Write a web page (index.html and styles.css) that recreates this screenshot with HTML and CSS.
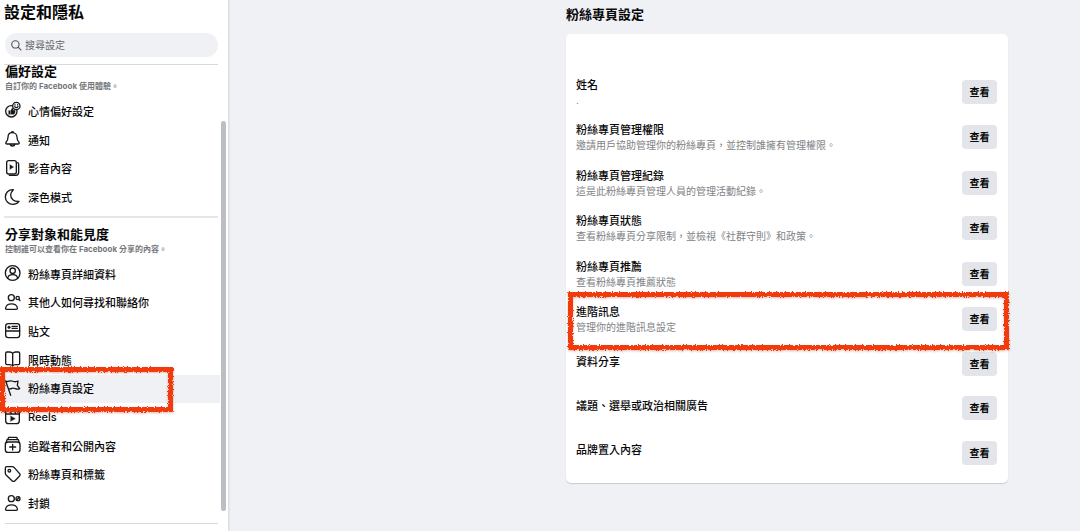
FILE: index.html
```html
<!DOCTYPE html>
<html lang="zh-Hant">
<head>
<meta charset="utf-8">
<meta name="viewport" content="width=device-width, initial-scale=1">
<title>粉絲專頁設定</title>
<link rel="stylesheet" href="styles.css">
</head>
<body>
<svg class="defs" aria-hidden="true">
  <filter id="crayon" x="-5%" y="-20%" width="110%" height="140%">
    <feTurbulence type="fractalNoise" baseFrequency="0.7" numOctaves="2" seed="4" result="noise"/>
    <feDisplacementMap in="SourceGraphic" in2="noise" scale="4" xChannelSelector="R" yChannelSelector="G" result="rough"/>
    <feGaussianBlur in="rough" stdDeviation="0.3" result="soft"/>
    <feDropShadow in="soft" dx="0" dy="1" stdDeviation="1" flood-color="#a03020" flood-opacity="0.35"/>
  </filter>
</svg>
<div class="app">
  <aside class="sidebar">
    <h1 class="sidebar-title">設定和隱私</h1>
    <label class="search">
      <svg class="search-icon" viewBox="0 0 30 30"><circle cx="12" cy="12" r="10"/><path d="M19 19l9 9"/></svg>
      <input class="search-input" type="search" placeholder="搜尋設定" aria-label="搜尋設定">
    </label>
    <section class="group">
      <h2 class="group-title">偏好設定</h2>
      <p class="group-note">自訂你的 Facebook 使用體驗。</p>
      <ul class="nav nav-short">
        <li><a class="nav-link" href="#"><svg class="icon" viewBox="0 0 48 48"><circle cx="19" cy="28" r="17"/><circle class="paper" cx="34" cy="12" r="11"/><path class="solid" d="M11 26h4v11h-4zM17 26l4-7c4-1 4 2 3 6h5c3 0 2 3 1 4 1 2 0 3-1 4 0 3-1 4-4 4h-8z"/><path d="M29 14q5 6 10 0M30 8v1M38 8v1"/></svg>心情偏好設定</a></li>
        <li><a class="nav-link" href="#"><svg class="icon" viewBox="0 0 48 48"><path d="M22 5C14 5 9 11 9 19c0 8-2 11-6 15-2 3 0 5 2 5h35c2 0 4-2 2-5-4-4-6-7-6-15 0-8-6-14-14-14zM19 5c0-4 7-4 7 0M15 39c2 8 13 8 15 0"/></svg>通知</a></li>
        <li><a class="nav-link" href="#"><svg class="icon" viewBox="0 0 48 48"><rect x="5" y="2" width="29" height="40" rx="6"/><path d="M38 8c3 1 3 3 3 5v24c0 6-3 9-8 9H13"/><path class="solid" d="M15 14l11 7-11 7z"/></svg>影音內容</a></li>
        <li><a class="nav-link" href="#"><svg class="icon" viewBox="0 0 48 48"><path d="M25 2C10 1 1 12 1 24s10 22 23 22c8 0 14-4 18-9-16 1-25-8-25-19 0-6 4-12 8-16z"/></svg>深色模式</a></li>
      </ul>
    </section>
    <section class="group group-spaced">
      <h2 class="group-title">分享對象和能見度</h2>
      <p class="group-note">控制誰可以查看你在 Facebook 分享的內容。</p>
      <ul class="nav nav-long">
        <li><a class="nav-link" href="#"><svg class="icon" viewBox="0 0 48 48"><circle cx="23" cy="24" r="22"/><circle cx="23" cy="17" r="8"/><path d="M8 40c2-15 28-15 30 0"/></svg>粉絲專頁詳細資料</a></li>
        <li><a class="nav-link" href="#"><svg class="icon" viewBox="0 0 48 48"><circle cx="19" cy="11" r="9"/><path d="M5 46c-3 0-4-2-3-5 4-15 31-15 35 0 1 3-1 5-3 5z"/><circle cx="38" cy="12" r="5"/><path d="M42 16l3 4"/></svg>其他人如何尋找和聯絡你</a></li>
        <li><a class="nav-link" href="#"><svg class="icon" viewBox="0 0 48 48"><rect x="2" y="2" width="42" height="42" rx="8"/><path d="M2 24h42M21 10h16M21 16h16"/><circle class="solid" cx="12" cy="13" r="4"/></svg>貼文</a></li>
        <li><a class="nav-link" href="#"><svg class="icon" viewBox="0 0 48 48"><path d="M23 7c-3-4-6-4-9-4H6C3 3 2 4 2 7v30c0 3 1 4 4 4h8c4 0 7 1 9 4 2-3 5-4 9-4h8c3 0 4-1 4-4V7c0-3-1-4-4-4h-8c-3 0-6 0-9 4zM23 7v38"/></svg>限時動態</a></li>
        <li class="nav-active"><a class="nav-link" href="#" aria-current="page"><svg class="icon" viewBox="0 0 48 48"><path d="M17 46L2 3c7 5 12-3 19 0 6 3 12 3 18 0l-2 13 7 10c-10 5-15-4-23-1-4 2-8 2-11 1"/></svg>粉絲專頁設定</a><span class="mark mark-nav"></span></li>
        <li><a class="nav-link" href="#"><svg class="icon" viewBox="0 0 48 48"><rect x="2" y="3" width="41" height="41" rx="9"/><path d="M2 15h41M14 3l6 12M27 3l6 12"/><path class="solid" d="M17 21l14 8-14 8z"/></svg>Reels</a></li>
        <li><a class="nav-link" href="#"><svg class="icon" viewBox="0 0 48 48"><rect x="1" y="15" width="44" height="31" rx="8"/><path d="M6 8h34M11 1h24M6 8L4 15M40 8l2 7M11 1L8 8M35 1l3 7M23 22v17M14 30h18"/></svg>追蹤者和公開內容</a></li>
        <li><a class="nav-link" href="#"><svg class="icon" viewBox="0 0 48 48"><path d="M1 6c0-3 2-4 4-4h17c3 0 4 1 6 3l15 17c3 3 3 6 0 9L30 44c-3 3-6 3-9 0L4 28c-2-2-3-4-3-6z"/><circle cx="13" cy="14" r="4"/></svg>粉絲專頁和標籤</a></li>
        <li><a class="nav-link" href="#"><svg class="icon" viewBox="0 0 48 48"><circle cx="19" cy="11" r="9"/><path d="M5 46c-3 0-4-2-3-5 4-15 31-15 35 0 1 3-1 5-3 5z"/><circle cx="39" cy="11" r="6"/><path d="M35 15l8-8"/></svg>封鎖</a></li>
      </ul>
    </section>
    <hr class="rule">
    <span class="scrollbar"></span>
  </aside>
  <main class="content">
    <div class="panel">
      <h2 class="panel-title">粉絲專頁設定</h2>
      <div class="card">
        <ul class="rows rows-detailed">
          <li class="row"><div class="row-text"><h3 class="row-title">姓名</h3><p class="row-note">.</p></div><button class="view" type="button">查看</button></li>
          <li class="row"><div class="row-text"><h3 class="row-title">粉絲專頁管理權限</h3><p class="row-note">邀請用戶協助管理你的粉絲專頁，並控制誰擁有管理權限。</p></div><button class="view" type="button">查看</button></li>
          <li class="row"><div class="row-text"><h3 class="row-title">粉絲專頁管理紀錄</h3><p class="row-note">這是此粉絲專頁管理人員的管理活動紀錄。</p></div><button class="view" type="button">查看</button></li>
          <li class="row"><div class="row-text"><h3 class="row-title">粉絲專頁狀態</h3><p class="row-note">查看粉絲專頁分享限制，並檢視《社群守則》和政策。</p></div><button class="view" type="button">查看</button></li>
          <li class="row"><div class="row-text"><h3 class="row-title">粉絲專頁推薦</h3><p class="row-note">查看粉絲專頁推薦狀態</p></div><button class="view" type="button">查看</button></li>
          <li class="row"><div class="row-text"><h3 class="row-title">進階訊息</h3><p class="row-note">管理你的進階訊息設定</p></div><button class="view" type="button">查看</button><span class="mark mark-row"></span></li>
        </ul>
        <ul class="rows rows-plain">
          <li class="row"><h3 class="row-title">資料分享</h3><button class="view" type="button">查看</button></li>
          <li class="row"><h3 class="row-title">議題、選舉或政治相關廣告</h3><button class="view" type="button">查看</button></li>
          <li class="row"><h3 class="row-title">品牌置入內容</h3><button class="view" type="button">查看</button></li>
        </ul>
      </div>
    </div>
  </main>
</div>
</body>
</html>
```
FILE: styles.css
```css
* {
  box-sizing: border-box;
}

body,
h1,
h2,
h3,
p,
ul {
  margin: 0;
  padding: 0;
}

body {
  background: #f0f1f5;
  color: #080809;
  font-family: Inter, "Noto Sans CJK TC", sans-serif;
  font-size: 11px;
}

ul {
  list-style: none;
}

.defs {
  position: absolute;
  width: 0;
  height: 0;
}

.app {
  display: flex;
  min-height: 100vh;
}

.sidebar {
  position: relative;
  flex: 0 0 228px;
  padding-top: 1px;
  background: #fff;
  box-shadow: 1px 0 2px rgba(0, 0, 0, 0.12);
}

.sidebar-title {
  padding-left: 4px;
  font-size: 16px;
  line-height: 22px;
  font-weight: 700;
}

.search {
  display: flex;
  align-items: center;
  gap: 3px;
  height: 24px;
  margin: 10px 10px 7px 5px;
  padding: 0 6px;
  border-radius: 12px;
  background: #f0f1f5;
}

.search-icon {
  width: 11px;
  height: 11px;
  fill: none;
  stroke: #505256;
  stroke-width: 3;
}

.search-input {
  flex: 1;
  min-width: 0;
  padding: 0;
  border: 0;
  outline: 0;
  background: transparent;
  font: inherit;
  font-size: 10px;
}

.search-input::placeholder {
  color: #65676b;
}

.group {
  margin-right: 10px;
  border-top: 1px solid #d8dadd;
  border-image: linear-gradient(90deg, transparent 5px, #d8dadd 5px) 1;
}

.group-spaced {
  margin-top: 4px;
  border-top-width: 2px;
  border-image: linear-gradient(90deg, transparent 5px, #e5e6e9 5px) 1;
  padding-top: 10px;
}

.group-title {
  padding-left: 5px;
  font-size: 13px;
  line-height: 12px;
  font-weight: 700;
}

.group-note {
  padding-left: 5px;
  color: #75777b;
  font-size: 8px;
  line-height: 18px;
  font-weight: 700;
}

.nav {
  display: grid;
  grid-auto-rows: 1fr;
  margin-top: 2px;
  margin-right: -2px;
}

.nav-short {
  min-height: 115px;
}

.nav-long {
  min-height: 258px;
}

.nav-link {
  display: flex;
  align-items: center;
  gap: 7px;
  height: 100%;
  padding-left: 5px;
  padding-bottom: 1px;
  color: inherit;
  font-weight: 500;
  text-decoration: none;
}

.nav-active {
  position: relative;
  background: #f0f1f5;
}

.icon {
  width: 16px;
  height: 16px;
  margin-bottom: 1px;
  overflow: visible;
  fill: none;
  stroke: #18191b;
  stroke-width: 4;
  stroke-linecap: round;
  stroke-linejoin: round;
}

.icon .solid {
  fill: #18191b;
  stroke-width: 1;
}

.icon .paper {
  fill: #fff;
}

.rule {
  height: 1px;
  margin: 5px 10px 0 5px;
  border: 0;
  background: #d8dadd;
}

.scrollbar {
  position: absolute;
  top: 121px;
  right: 2px;
  bottom: 20px;
  width: 5px;
  border-radius: 3px;
  background: #bbbec3;
}

.content {
  display: flex;
  flex: 1;
  justify-content: flex-end;
  padding: 4px 72px 48px 24px;
}

.panel {
  flex: 0 1 442px;
}

.panel-title {
  margin-bottom: 10px;
  font-size: 13px;
  line-height: 20px;
  font-weight: 700;
}

.card {
  padding: 35px 0 8px;
  border-radius: 5px;
  background: #fff;
  box-shadow: 0 1px 1px rgba(0, 0, 0, 0.16);
}

.rows {
  display: grid;
  grid-auto-rows: 1fr;
}

.rows-detailed {
  min-height: 273px;
}

.rows-plain {
  min-height: 133px;
}

.row {
  position: relative;
  display: flex;
  align-items: center;
  justify-content: space-between;
  gap: 12px;
  padding: 0 11px 0 10px;
}

.row-title {
  font-size: 11px;
  line-height: 16px;
  font-weight: 500;
}

.rows-plain .row-title {
  padding-bottom: 5px;
}

.row-note {
  color: #808286;
  font-size: 10px;
  line-height: 14px;
  font-weight: 400;
}

.view {
  flex: none;
  width: 35px;
  height: 24px;
  padding: 0 0 1px;
  border: 0;
  border-radius: 4px;
  background: #e3e5ea;
  color: #080809;
  font: inherit;
  font-size: 10px;
  font-weight: 700;
}

.mark {
  position: absolute;
  z-index: 1;
  border: 5px solid #f23a10;
  border-radius: 1px;
  filter: url(#crayon);
  pointer-events: none;
}

.mark-nav {
  inset: -8px 47px -9px 0;
}

.mark-row {
  inset: -5px -1px -8px 2px;
}
```
